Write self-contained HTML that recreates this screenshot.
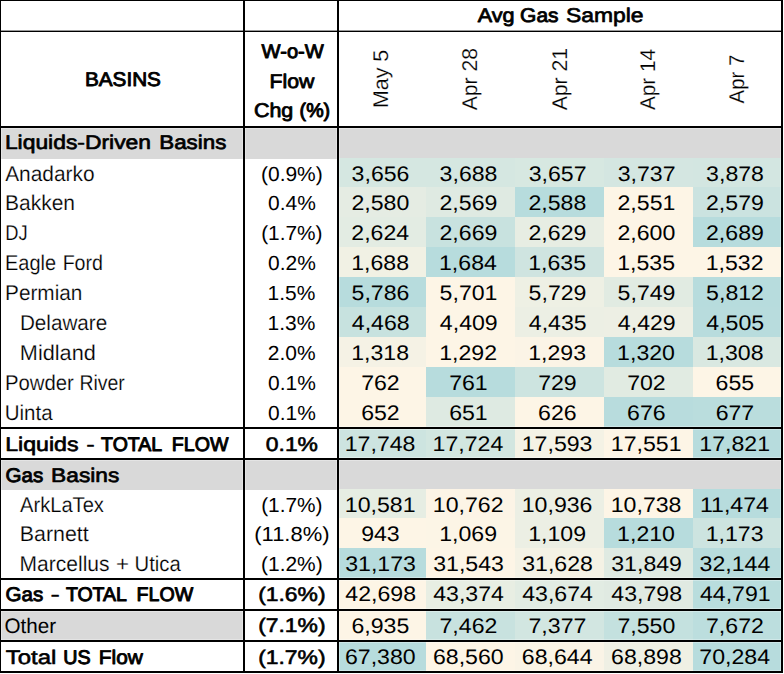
<!DOCTYPE html>
<html lang="en">
<head>
<meta charset="utf-8">
<title>Avg Gas Sample by Basin</title>
<style>
html,body{margin:0;padding:0;background:#fff;}
body{width:784px;height:674px;overflow:hidden;}
svg{display:block;font-family:"Liberation Sans",sans-serif;fill:#000;}
.m{stroke:#000;stroke-linejoin:round;}
</style>
</head>
<body>
<svg width="784" height="674" viewBox="0 0 784 674" shape-rendering="crispEdges" text-rendering="geometricPrecision">
<rect x="0" y="0" width="784" height="674" fill="#ffffff"/>
<rect x="1" y="128" width="780" height="30" fill="#d9d9d9"/>
<rect x="1" y="158" width="336" height="1" fill="#d9d9d9"/>
<rect x="1" y="460" width="780" height="29" fill="#d9d9d9"/>
<rect x="1" y="489" width="336" height="1" fill="#d9d9d9"/>
<rect x="339" y="158" width="87" height="29" fill="#d5e7e1"/>
<rect x="426" y="158" width="89" height="29" fill="#d5e7e1"/>
<rect x="515" y="158" width="89" height="29" fill="#d7e8e1"/>
<rect x="604" y="158" width="89" height="29" fill="#d4e6e1"/>
<rect x="693" y="158" width="88" height="29" fill="#d3e6e1"/>
<rect x="339" y="187" width="87" height="30" fill="#e5ece3"/>
<rect x="426" y="187" width="89" height="30" fill="#dfeae2"/>
<rect x="515" y="187" width="89" height="30" fill="#b7dcdd"/>
<rect x="604" y="187" width="89" height="30" fill="#fdf5e6"/>
<rect x="693" y="187" width="88" height="30" fill="#cbe3e0"/>
<rect x="339" y="217" width="87" height="30" fill="#e3ece3"/>
<rect x="426" y="217" width="89" height="30" fill="#c8e2df"/>
<rect x="515" y="217" width="89" height="30" fill="#e7ede3"/>
<rect x="604" y="217" width="89" height="30" fill="#fdf5e6"/>
<rect x="693" y="217" width="88" height="30" fill="#b7dcdd"/>
<rect x="339" y="247" width="87" height="30" fill="#f1f1e4"/>
<rect x="426" y="247" width="89" height="30" fill="#b7dcdd"/>
<rect x="515" y="247" width="89" height="30" fill="#cfe4e0"/>
<rect x="604" y="247" width="89" height="30" fill="#fdf5e6"/>
<rect x="693" y="247" width="88" height="30" fill="#fdf5e6"/>
<rect x="339" y="277" width="87" height="30" fill="#b7dcdd"/>
<rect x="426" y="277" width="89" height="30" fill="#fdf5e6"/>
<rect x="515" y="277" width="89" height="30" fill="#eef0e4"/>
<rect x="604" y="277" width="89" height="30" fill="#e1ebe2"/>
<rect x="693" y="277" width="88" height="30" fill="#b7dcdd"/>
<rect x="339" y="307" width="87" height="30" fill="#c7e2df"/>
<rect x="426" y="307" width="89" height="30" fill="#fdf5e6"/>
<rect x="515" y="307" width="89" height="30" fill="#ecefe4"/>
<rect x="604" y="307" width="89" height="30" fill="#edefe4"/>
<rect x="693" y="307" width="88" height="30" fill="#b8dcdd"/>
<rect x="339" y="337" width="87" height="30" fill="#f5f2e5"/>
<rect x="426" y="337" width="89" height="30" fill="#fdf5e6"/>
<rect x="515" y="337" width="89" height="30" fill="#fbf4e6"/>
<rect x="604" y="337" width="89" height="30" fill="#b7dcdd"/>
<rect x="693" y="337" width="88" height="30" fill="#d9e8e1"/>
<rect x="339" y="367" width="87" height="30" fill="#fdf5e6"/>
<rect x="426" y="367" width="89" height="30" fill="#b7dcdd"/>
<rect x="515" y="367" width="89" height="30" fill="#cde4e0"/>
<rect x="604" y="367" width="89" height="30" fill="#e1ebe2"/>
<rect x="693" y="367" width="88" height="30" fill="#fdf5e6"/>
<rect x="339" y="397" width="87" height="30" fill="#fdf5e6"/>
<rect x="426" y="397" width="89" height="30" fill="#deeae2"/>
<rect x="515" y="397" width="89" height="30" fill="#fdf5e6"/>
<rect x="604" y="397" width="89" height="30" fill="#b8dcdd"/>
<rect x="693" y="397" width="88" height="30" fill="#badddd"/>
<rect x="339" y="429" width="87" height="29" fill="#cde4e0"/>
<rect x="426" y="429" width="89" height="29" fill="#d2e6e0"/>
<rect x="515" y="429" width="89" height="29" fill="#f4f2e5"/>
<rect x="604" y="429" width="89" height="29" fill="#fdf5e6"/>
<rect x="693" y="429" width="88" height="29" fill="#b7dcdd"/>
<rect x="339" y="489" width="87" height="29" fill="#e6ede3"/>
<rect x="426" y="489" width="89" height="29" fill="#fcf4e6"/>
<rect x="515" y="489" width="89" height="29" fill="#ecefe4"/>
<rect x="604" y="489" width="89" height="29" fill="#fdf5e6"/>
<rect x="693" y="489" width="88" height="29" fill="#b7dcdd"/>
<rect x="339" y="518" width="87" height="30" fill="#fdf5e6"/>
<rect x="426" y="518" width="89" height="30" fill="#fcf5e6"/>
<rect x="515" y="518" width="89" height="30" fill="#ecefe4"/>
<rect x="604" y="518" width="89" height="30" fill="#b7dcdd"/>
<rect x="693" y="518" width="88" height="30" fill="#cde4e0"/>
<rect x="339" y="548" width="87" height="30" fill="#b7dcdd"/>
<rect x="426" y="548" width="89" height="30" fill="#fdf5e6"/>
<rect x="515" y="548" width="89" height="30" fill="#f4f2e5"/>
<rect x="604" y="548" width="89" height="30" fill="#dfeae2"/>
<rect x="693" y="548" width="88" height="30" fill="#b8dcdd"/>
<rect x="339" y="580" width="87" height="29" fill="#fdf5e6"/>
<rect x="426" y="580" width="89" height="29" fill="#e8eee3"/>
<rect x="515" y="580" width="89" height="29" fill="#e2ece3"/>
<rect x="604" y="580" width="89" height="29" fill="#e0eae2"/>
<rect x="693" y="580" width="88" height="29" fill="#b9dddd"/>
<rect x="1" y="611" width="242" height="29" fill="#d9d9d9"/>
<rect x="339" y="611" width="87" height="29" fill="#fdf5e6"/>
<rect x="426" y="611" width="89" height="29" fill="#c8e2df"/>
<rect x="515" y="611" width="89" height="29" fill="#d2e6e1"/>
<rect x="604" y="611" width="89" height="29" fill="#c4e1df"/>
<rect x="693" y="611" width="88" height="29" fill="#bcdede"/>
<rect x="339" y="642" width="87" height="29" fill="#b7dcdd"/>
<rect x="426" y="642" width="89" height="29" fill="#fdf5e6"/>
<rect x="515" y="642" width="89" height="29" fill="#faf4e6"/>
<rect x="604" y="642" width="89" height="29" fill="#eff0e4"/>
<rect x="693" y="642" width="88" height="29" fill="#b7dcdd"/>
<rect x="0" y="-1" width="783" height="3" fill="#ffffff" fill-opacity="0.3"/>
<rect x="0" y="30" width="783" height="3" fill="#ffffff" fill-opacity="0.3"/>
<rect x="0" y="125" width="783" height="4" fill="#ffffff" fill-opacity="0.3"/>
<rect x="0" y="670" width="783" height="4" fill="#ffffff" fill-opacity="0.3"/>
<rect x="0" y="426" width="783" height="4" fill="#ffffff" fill-opacity="0.3"/>
<rect x="0" y="457" width="783" height="4" fill="#ffffff" fill-opacity="0.3"/>
<rect x="0" y="577" width="783" height="4" fill="#ffffff" fill-opacity="0.3"/>
<rect x="0" y="608" width="783" height="4" fill="#ffffff" fill-opacity="0.3"/>
<rect x="0" y="639" width="783" height="4" fill="#ffffff" fill-opacity="0.3"/>
<rect x="-1" y="0" width="3" height="673" fill="#ffffff" fill-opacity="0.3"/>
<rect x="242" y="0" width="4" height="673" fill="#ffffff" fill-opacity="0.3"/>
<rect x="336" y="0" width="4" height="673" fill="#ffffff" fill-opacity="0.3"/>
<rect x="780" y="0" width="4" height="673" fill="#ffffff" fill-opacity="0.3"/>
<rect x="0" y="30" width="783" height="1" fill="#000000" fill-opacity="0.4"/>
<rect x="0" y="0" width="783" height="1" fill="#000000"/>
<rect x="0" y="31" width="783" height="1" fill="#000000"/>
<rect x="0" y="126" width="783" height="2" fill="#000000"/>
<rect x="0" y="671" width="783" height="2" fill="#000000"/>
<rect x="0" y="427" width="783" height="2" fill="#000000"/>
<rect x="0" y="458" width="783" height="2" fill="#000000"/>
<rect x="0" y="578" width="783" height="2" fill="#000000"/>
<rect x="0" y="609" width="783" height="2" fill="#000000"/>
<rect x="0" y="640" width="783" height="2" fill="#000000"/>
<rect x="0" y="0" width="1" height="673" fill="#000000"/>
<rect x="243" y="0" width="2" height="673" fill="#000000"/>
<rect x="337" y="0" width="2" height="673" fill="#000000"/>
<rect x="781" y="0" width="2" height="673" fill="#000000"/>
<text y="22.22" font-size="19.8" class="m"><tspan x="477.69" textLength="36.83" lengthAdjust="spacingAndGlyphs" stroke-width="0.79">Avg</tspan> <tspan x="520.08" textLength="38.43" lengthAdjust="spacingAndGlyphs" stroke-width="0.85">Gas</tspan> <tspan x="565.90" textLength="77.61" lengthAdjust="spacingAndGlyphs" stroke-width="0.66">Sample</tspan></text>
<text x="84.98" y="85.96" font-size="19.8" textLength="75.95" lengthAdjust="spacingAndGlyphs" class="m" stroke-width="0.88">BASINS</text>
<text x="261.57" y="57.63" font-size="19.8" textLength="62.24" lengthAdjust="spacingAndGlyphs" class="m" stroke-width="0.93">W-o-W</text>
<text x="269.41" y="87.59" font-size="19.8" textLength="44.92" lengthAdjust="spacingAndGlyphs" class="m" stroke-width="0.82">Flow</text>
<text y="116.65" font-size="19.8" class="m"><tspan x="253.93" textLength="39.38" lengthAdjust="spacingAndGlyphs" stroke-width="0.80">Chg</tspan> <tspan x="299.61" textLength="30.54" lengthAdjust="spacingAndGlyphs" stroke-width="0.98">(%)</tspan></text>
<text y="149.15" font-size="19.8" class="m"><tspan x="4.90" textLength="146.16" lengthAdjust="spacingAndGlyphs" stroke-width="0.67">Liquids-Driven</tspan> <tspan x="159.27" textLength="67.05" lengthAdjust="spacingAndGlyphs" stroke-width="0.72">Basins</tspan></text>
<text y="481.61" font-size="19.8" class="m"><tspan x="5.52" textLength="37.65" lengthAdjust="spacingAndGlyphs" stroke-width="0.89">Gas</tspan> <tspan x="51.13" textLength="68.13" lengthAdjust="spacingAndGlyphs" stroke-width="0.68">Basins</tspan></text>
<text transform="translate(388.10 106.30) rotate(-90)" x="-1.81" y="0" font-size="21.3" textLength="58.29" lengthAdjust="spacingAndGlyphs" stroke="#ffffff" stroke-width="0.2">May 5</text>
<text transform="translate(476.60 110.20) rotate(-90)" x="-0.10" y="0" font-size="21.3" textLength="62.27" lengthAdjust="spacingAndGlyphs" stroke="#ffffff" stroke-width="0.2">Apr 28</text>
<text transform="translate(566.80 110.20) rotate(-90)" x="-0.10" y="0" font-size="21.3" textLength="62.38" lengthAdjust="spacingAndGlyphs" stroke="#ffffff" stroke-width="0.2">Apr 21</text>
<text transform="translate(654.90 110.00) rotate(-90)" x="-0.10" y="0" font-size="21.3" textLength="61.14" lengthAdjust="spacingAndGlyphs" stroke="#ffffff" stroke-width="0.2">Apr 14</text>
<text transform="translate(744.30 103.30) rotate(-90)" x="-0.10" y="0" font-size="21.3" textLength="48.64" lengthAdjust="spacingAndGlyphs" stroke="#ffffff" stroke-width="0.2">Apr 7</text>
<text x="5.20" y="180.50" font-size="21.3" textLength="89.36" lengthAdjust="spacingAndGlyphs" stroke="#ffffff" stroke-width="0.2">Anadarko</text>
<text x="260.99" y="180.90" font-size="20.3" textLength="61.78" lengthAdjust="spacingAndGlyphs">(0.9%)</text>
<text x="351.64" y="180.60" font-size="21.0" textLength="57.86" lengthAdjust="spacingAndGlyphs">3,656</text>
<text x="439.64" y="180.60" font-size="21.0" textLength="57.86" lengthAdjust="spacingAndGlyphs">3,688</text>
<text x="528.70" y="180.60" font-size="21.0" textLength="57.86" lengthAdjust="spacingAndGlyphs">3,657</text>
<text x="617.70" y="180.60" font-size="21.0" textLength="57.86" lengthAdjust="spacingAndGlyphs">3,737</text>
<text x="706.14" y="180.60" font-size="21.0" textLength="57.86" lengthAdjust="spacingAndGlyphs">3,878</text>
<text x="5.02" y="209.90" font-size="21.3" textLength="69.96" lengthAdjust="spacingAndGlyphs" stroke="#ffffff" stroke-width="0.2">Bakken</text>
<text x="267.99" y="210.30" font-size="20.3" textLength="47.81" lengthAdjust="spacingAndGlyphs">0.4%</text>
<text x="351.41" y="210.00" font-size="21.0" textLength="57.86" lengthAdjust="spacingAndGlyphs">2,580</text>
<text x="439.53" y="210.00" font-size="21.0" textLength="57.86" lengthAdjust="spacingAndGlyphs">2,569</text>
<text x="528.47" y="210.00" font-size="21.0" textLength="57.86" lengthAdjust="spacingAndGlyphs">2,588</text>
<text x="617.53" y="210.00" font-size="21.0" textLength="57.86" lengthAdjust="spacingAndGlyphs">2,551</text>
<text x="706.03" y="210.00" font-size="21.0" textLength="57.86" lengthAdjust="spacingAndGlyphs">2,579</text>
<text x="5.24" y="239.70" font-size="21.3" textLength="22.34" lengthAdjust="spacingAndGlyphs" stroke="#ffffff" stroke-width="0.2">DJ</text>
<text x="261.20" y="240.10" font-size="20.3" textLength="61.36" lengthAdjust="spacingAndGlyphs">(1.7%)</text>
<text x="351.29" y="239.80" font-size="21.0" textLength="57.86" lengthAdjust="spacingAndGlyphs">2,624</text>
<text x="439.53" y="239.80" font-size="21.0" textLength="57.86" lengthAdjust="spacingAndGlyphs">2,669</text>
<text x="528.53" y="239.80" font-size="21.0" textLength="57.86" lengthAdjust="spacingAndGlyphs">2,629</text>
<text x="617.41" y="239.80" font-size="21.0" textLength="57.86" lengthAdjust="spacingAndGlyphs">2,600</text>
<text x="706.03" y="239.80" font-size="21.0" textLength="57.86" lengthAdjust="spacingAndGlyphs">2,689</text>
<text y="269.70" font-size="21.3" stroke="#ffffff" stroke-width="0.2"><tspan x="5.00" textLength="51.02" lengthAdjust="spacingAndGlyphs">Eagle</tspan> <tspan x="62.63" textLength="40.37" lengthAdjust="spacingAndGlyphs">Ford</tspan></text>
<text x="267.99" y="270.10" font-size="20.3" textLength="47.81" lengthAdjust="spacingAndGlyphs">0.2%</text>
<text x="351.18" y="269.80" font-size="21.0" textLength="57.86" lengthAdjust="spacingAndGlyphs">1,688</text>
<text x="439.00" y="269.80" font-size="21.0" textLength="57.86" lengthAdjust="spacingAndGlyphs">1,684</text>
<text x="528.18" y="269.80" font-size="21.0" textLength="57.86" lengthAdjust="spacingAndGlyphs">1,635</text>
<text x="617.18" y="269.80" font-size="21.0" textLength="57.86" lengthAdjust="spacingAndGlyphs">1,535</text>
<text x="705.74" y="269.80" font-size="21.0" textLength="57.86" lengthAdjust="spacingAndGlyphs">1,532</text>
<text x="5.04" y="299.70" font-size="21.3" textLength="77.33" lengthAdjust="spacingAndGlyphs" stroke="#ffffff" stroke-width="0.2">Permian</text>
<text x="267.57" y="300.10" font-size="20.3" textLength="47.81" lengthAdjust="spacingAndGlyphs">1.5%</text>
<text x="351.58" y="299.80" font-size="21.0" textLength="57.86" lengthAdjust="spacingAndGlyphs">5,786</text>
<text x="439.64" y="299.80" font-size="21.0" textLength="57.86" lengthAdjust="spacingAndGlyphs">5,701</text>
<text x="528.64" y="299.80" font-size="21.0" textLength="57.86" lengthAdjust="spacingAndGlyphs">5,729</text>
<text x="617.64" y="299.80" font-size="21.0" textLength="57.86" lengthAdjust="spacingAndGlyphs">5,749</text>
<text x="706.14" y="299.80" font-size="21.0" textLength="57.86" lengthAdjust="spacingAndGlyphs">5,812</text>
<text x="19.95" y="329.70" font-size="21.3" textLength="87.30" lengthAdjust="spacingAndGlyphs" stroke="#ffffff" stroke-width="0.2">Delaware</text>
<text x="267.57" y="330.10" font-size="20.3" textLength="47.81" lengthAdjust="spacingAndGlyphs">1.3%</text>
<text x="351.81" y="329.80" font-size="21.0" textLength="57.86" lengthAdjust="spacingAndGlyphs">4,468</text>
<text x="439.87" y="329.80" font-size="21.0" textLength="57.86" lengthAdjust="spacingAndGlyphs">4,409</text>
<text x="528.81" y="329.80" font-size="21.0" textLength="57.86" lengthAdjust="spacingAndGlyphs">4,435</text>
<text x="617.87" y="329.80" font-size="21.0" textLength="57.86" lengthAdjust="spacingAndGlyphs">4,429</text>
<text x="706.31" y="329.80" font-size="21.0" textLength="57.86" lengthAdjust="spacingAndGlyphs">4,505</text>
<text x="19.86" y="359.70" font-size="21.3" textLength="75.96" lengthAdjust="spacingAndGlyphs" stroke="#ffffff" stroke-width="0.2">Midland</text>
<text x="267.83" y="360.10" font-size="20.3" textLength="47.81" lengthAdjust="spacingAndGlyphs">2.0%</text>
<text x="351.18" y="359.80" font-size="21.0" textLength="57.86" lengthAdjust="spacingAndGlyphs">1,318</text>
<text x="439.24" y="359.80" font-size="21.0" textLength="57.86" lengthAdjust="spacingAndGlyphs">1,292</text>
<text x="528.18" y="359.80" font-size="21.0" textLength="57.86" lengthAdjust="spacingAndGlyphs">1,293</text>
<text x="617.12" y="359.80" font-size="21.0" textLength="57.86" lengthAdjust="spacingAndGlyphs">1,320</text>
<text x="705.68" y="359.80" font-size="21.0" textLength="57.86" lengthAdjust="spacingAndGlyphs">1,308</text>
<text y="389.70" font-size="21.3" stroke="#ffffff" stroke-width="0.2"><tspan x="4.97" textLength="68.89" lengthAdjust="spacingAndGlyphs">Powder</tspan> <tspan x="79.44" textLength="45.41" lengthAdjust="spacingAndGlyphs">River</tspan></text>
<text x="267.99" y="390.10" font-size="20.3" textLength="47.81" lengthAdjust="spacingAndGlyphs">0.1%</text>
<text x="361.17" y="389.80" font-size="21.0" textLength="38.58" lengthAdjust="spacingAndGlyphs">762</text>
<text x="449.17" y="389.80" font-size="21.0" textLength="38.58" lengthAdjust="spacingAndGlyphs">761</text>
<text x="538.17" y="389.80" font-size="21.0" textLength="38.58" lengthAdjust="spacingAndGlyphs">729</text>
<text x="627.17" y="389.80" font-size="21.0" textLength="38.58" lengthAdjust="spacingAndGlyphs">702</text>
<text x="715.61" y="389.80" font-size="21.0" textLength="38.58" lengthAdjust="spacingAndGlyphs">655</text>
<text x="4.76" y="419.70" font-size="21.3" textLength="47.86" lengthAdjust="spacingAndGlyphs" stroke="#ffffff" stroke-width="0.2">Uinta</text>
<text x="267.99" y="420.10" font-size="20.3" textLength="47.81" lengthAdjust="spacingAndGlyphs">0.1%</text>
<text x="361.17" y="419.80" font-size="21.0" textLength="38.58" lengthAdjust="spacingAndGlyphs">652</text>
<text x="449.17" y="419.80" font-size="21.0" textLength="38.58" lengthAdjust="spacingAndGlyphs">651</text>
<text x="538.11" y="419.80" font-size="21.0" textLength="38.58" lengthAdjust="spacingAndGlyphs">626</text>
<text x="627.11" y="419.80" font-size="21.0" textLength="38.58" lengthAdjust="spacingAndGlyphs">676</text>
<text x="715.67" y="419.80" font-size="21.0" textLength="38.58" lengthAdjust="spacingAndGlyphs">677</text>
<text y="450.82" font-size="19.8" class="m"><tspan x="5.16" textLength="73.43" lengthAdjust="spacingAndGlyphs" stroke-width="0.64">Liquids</tspan> <tspan x="86.38" textLength="8.52" lengthAdjust="spacingAndGlyphs" stroke-width="0.40">-</tspan> <tspan x="101.12" textLength="60.27" lengthAdjust="spacingAndGlyphs" stroke-width="1.02">TOTAL</tspan> <tspan x="171.82" textLength="56.66" lengthAdjust="spacingAndGlyphs" stroke-width="0.98">FLOW</tspan></text>
<text x="265.81" y="450.51" font-size="19.8" textLength="52.17" lengthAdjust="spacingAndGlyphs" class="m" stroke-width="0.59">0.1%</text>
<text x="344.75" y="451.00" font-size="21.0" textLength="70.72" lengthAdjust="spacingAndGlyphs">17,748</text>
<text x="432.58" y="451.00" font-size="21.0" textLength="70.72" lengthAdjust="spacingAndGlyphs">17,724</text>
<text x="521.75" y="451.00" font-size="21.0" textLength="70.72" lengthAdjust="spacingAndGlyphs">17,593</text>
<text x="610.81" y="451.00" font-size="21.0" textLength="70.72" lengthAdjust="spacingAndGlyphs">17,551</text>
<text x="699.31" y="451.00" font-size="21.0" textLength="70.72" lengthAdjust="spacingAndGlyphs">17,821</text>
<text x="20.00" y="512.30" font-size="21.3" textLength="83.90" lengthAdjust="spacingAndGlyphs" stroke="#ffffff" stroke-width="0.2">ArkLaTex</text>
<text x="261.20" y="511.80" font-size="20.3" textLength="61.36" lengthAdjust="spacingAndGlyphs">(1.7%)</text>
<text x="344.81" y="511.50" font-size="21.0" textLength="70.72" lengthAdjust="spacingAndGlyphs">10,581</text>
<text x="432.81" y="511.50" font-size="21.0" textLength="70.72" lengthAdjust="spacingAndGlyphs">10,762</text>
<text x="521.75" y="511.50" font-size="21.0" textLength="70.72" lengthAdjust="spacingAndGlyphs">10,936</text>
<text x="610.75" y="511.50" font-size="21.0" textLength="70.72" lengthAdjust="spacingAndGlyphs">10,738</text>
<text x="699.93" y="511.50" font-size="21.0" textLength="69.00" lengthAdjust="spacingAndGlyphs">11,474</text>
<text x="19.89" y="540.80" font-size="21.3" textLength="68.87" lengthAdjust="spacingAndGlyphs" stroke="#ffffff" stroke-width="0.2">Barnett</text>
<text x="254.28" y="541.20" font-size="20.3" textLength="75.19" lengthAdjust="spacingAndGlyphs">(11.8%)</text>
<text x="361.17" y="540.90" font-size="21.0" textLength="38.58" lengthAdjust="spacingAndGlyphs">943</text>
<text x="439.24" y="540.90" font-size="21.0" textLength="57.86" lengthAdjust="spacingAndGlyphs">1,069</text>
<text x="528.24" y="540.90" font-size="21.0" textLength="57.86" lengthAdjust="spacingAndGlyphs">1,109</text>
<text x="617.12" y="540.90" font-size="21.0" textLength="57.86" lengthAdjust="spacingAndGlyphs">1,210</text>
<text x="705.68" y="540.90" font-size="21.0" textLength="57.86" lengthAdjust="spacingAndGlyphs">1,173</text>
<text y="570.70" font-size="21.3" stroke="#ffffff" stroke-width="0.2"><tspan x="19.62" textLength="89.92" lengthAdjust="spacingAndGlyphs">Marcellus</tspan> <tspan x="116.10" textLength="12.99" lengthAdjust="spacingAndGlyphs">+</tspan> <tspan x="134.58" textLength="46.14" lengthAdjust="spacingAndGlyphs">Utica</tspan></text>
<text x="261.04" y="571.10" font-size="20.3" textLength="61.67" lengthAdjust="spacingAndGlyphs">(1.2%)</text>
<text x="345.21" y="570.80" font-size="21.0" textLength="70.72" lengthAdjust="spacingAndGlyphs">31,173</text>
<text x="433.21" y="570.80" font-size="21.0" textLength="70.72" lengthAdjust="spacingAndGlyphs">31,543</text>
<text x="522.21" y="570.80" font-size="21.0" textLength="70.72" lengthAdjust="spacingAndGlyphs">31,628</text>
<text x="611.27" y="570.80" font-size="21.0" textLength="70.72" lengthAdjust="spacingAndGlyphs">31,849</text>
<text x="699.54" y="570.80" font-size="21.0" textLength="70.72" lengthAdjust="spacingAndGlyphs">32,144</text>
<text y="601.29" font-size="19.8" class="m"><tspan x="5.52" textLength="37.65" lengthAdjust="spacingAndGlyphs" stroke-width="0.89">Gas</tspan> <tspan x="50.48" textLength="9.32" lengthAdjust="spacingAndGlyphs" stroke-width="0.40">-</tspan> <tspan x="65.92" textLength="60.27" lengthAdjust="spacingAndGlyphs" stroke-width="1.02">TOTAL</tspan> <tspan x="136.62" textLength="56.66" lengthAdjust="spacingAndGlyphs" stroke-width="0.98">FLOW</tspan></text>
<text x="258.17" y="600.81" font-size="19.8" textLength="67.41" lengthAdjust="spacingAndGlyphs" class="m" stroke-width="0.59">(1.6%)</text>
<text x="345.38" y="601.30" font-size="21.0" textLength="70.72" lengthAdjust="spacingAndGlyphs">42,698</text>
<text x="433.21" y="601.30" font-size="21.0" textLength="70.72" lengthAdjust="spacingAndGlyphs">43,374</text>
<text x="522.21" y="601.30" font-size="21.0" textLength="70.72" lengthAdjust="spacingAndGlyphs">43,674</text>
<text x="611.38" y="601.30" font-size="21.0" textLength="70.72" lengthAdjust="spacingAndGlyphs">43,798</text>
<text x="699.94" y="601.30" font-size="21.0" textLength="70.72" lengthAdjust="spacingAndGlyphs">44,791</text>
<text x="4.47" y="632.70" font-size="21.0" textLength="51.60" lengthAdjust="spacingAndGlyphs">Other</text>
<text x="258.17" y="632.41" font-size="19.8" textLength="67.41" lengthAdjust="spacingAndGlyphs" class="m" stroke-width="0.59">(7.1%)</text>
<text x="351.47" y="632.90" font-size="21.0" textLength="57.86" lengthAdjust="spacingAndGlyphs">6,935</text>
<text x="439.53" y="632.90" font-size="21.0" textLength="57.86" lengthAdjust="spacingAndGlyphs">7,462</text>
<text x="528.53" y="632.90" font-size="21.0" textLength="57.86" lengthAdjust="spacingAndGlyphs">7,377</text>
<text x="617.41" y="632.90" font-size="21.0" textLength="57.86" lengthAdjust="spacingAndGlyphs">7,550</text>
<text x="706.03" y="632.90" font-size="21.0" textLength="57.86" lengthAdjust="spacingAndGlyphs">7,672</text>
<text y="663.90" font-size="19.8" class="m"><tspan x="5.70" textLength="50.61" lengthAdjust="spacingAndGlyphs" stroke-width="0.56">Total</tspan> <tspan x="63.31" textLength="27.32" lengthAdjust="spacingAndGlyphs" stroke-width="0.98">US</tspan> <tspan x="98.86" textLength="44.05" lengthAdjust="spacingAndGlyphs" stroke-width="0.86">Flow</tspan></text>
<text x="258.17" y="663.51" font-size="19.8" textLength="67.41" lengthAdjust="spacingAndGlyphs" class="m" stroke-width="0.59">(1.7%)</text>
<text x="344.98" y="664.00" font-size="21.0" textLength="70.72" lengthAdjust="spacingAndGlyphs">67,380</text>
<text x="432.98" y="664.00" font-size="21.0" textLength="70.72" lengthAdjust="spacingAndGlyphs">68,560</text>
<text x="521.86" y="664.00" font-size="21.0" textLength="70.72" lengthAdjust="spacingAndGlyphs">68,644</text>
<text x="611.04" y="664.00" font-size="21.0" textLength="70.72" lengthAdjust="spacingAndGlyphs">68,898</text>
<text x="699.36" y="664.00" font-size="21.0" textLength="70.72" lengthAdjust="spacingAndGlyphs">70,284</text>
</svg>
</body>
</html>
